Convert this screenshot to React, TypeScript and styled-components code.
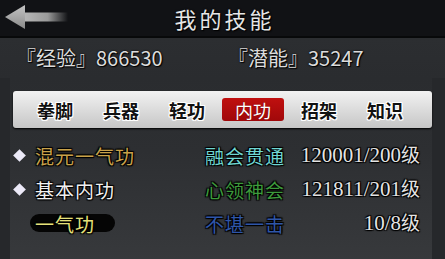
import React from "react";
import styled, { createGlobalStyle } from "styled-components";

const Global = createGlobalStyle`
  html, body { margin: 0; padding: 0; background: #222427; }
  body { width: 445px; height: 259px; overflow: hidden; }
`;

const Screen = styled.div`
  width: 445px;
  height: 259px;
  display: flex;
  flex-direction: column;
  background: #26282b;
  font-family: "Noto Sans CJK SC", "Liberation Sans", sans-serif;
  overflow: hidden;
`;

const Header = styled.div`
  height: 36px;
  flex: none;
  position: relative;
  display: flex;
  align-items: center;
  justify-content: center;
  background: #111215;
  border-bottom: 2px solid #08090a;
`;

const BackButton = styled.div`
  position: absolute;
  left: 4px;
  top: 4px;
  width: 64px;
  height: 28px;
`;

const Title = styled.div`
  color: #e6e6e6;
  font-size: 22px;
  letter-spacing: 3px;
  line-height: 1;
  margin-left: 4px;
  text-shadow: 0 0 2px #000, 1px 1px 1px #000;
`;

const Stats = styled.div`
  height: 40px;
  flex: none;
  display: grid;
  grid-template-columns: 212px 1fr;
  align-items: center;
  padding: 0 0 0 16px;
  background: linear-gradient(#2c2e31, #2a2c2f);
`;

const Stat = styled.div`
  color: #dcdcdc;
  font-size: 20px;
  line-height: 1;
  white-space: nowrap;
  text-shadow: 0 0 2px #000, 1px 1px 1px #000;
`;

const Body = styled.div`
  flex: 1;
  display: flex;
  flex-direction: column;
  margin: 0 13px 0 10px;
  background: linear-gradient(#2a2c2f, #2d2f32 40%, #37393c);
`;

const TabBar = styled.div`
  height: 37px;
  margin: 13px 0 0 3px;
  display: grid;
  grid-template-columns: repeat(6, 66px);
  align-items: center;
  padding-left: 9px;
  border-radius: 3px;
  background: linear-gradient(#f2f2f2, #dcdcdc 50%, #c6c6c6);
  box-shadow: 0 1px 2px #000;
`;

const Tab = styled.div<{ $active?: boolean }>`
  height: 23px;
  margin: 0 2px;
  display: flex;
  align-items: center;
  justify-content: center;
  border-radius: 3px;
  font-size: 18px;
  font-weight: ${(p) => (p.$active ? 400 : 700)};
  line-height: 1;
  color: ${(p) => (p.$active ? "#ffffff" : "#111111")};
  background: ${(p) => (p.$active ? "linear-gradient(#c0100f, #a0080a)" : "transparent")};
  text-shadow: ${(p) =>
    p.$active
      ? "0 0 1px #600"
      : "1px 0 0 #fff, -1px 0 0 #fff, 0 1px 0 #fff, 0 -1px 0 #fff, 1px 1px 0 #fff, -1px -1px 0 #fff, 1px -1px 0 #fff, -1px 1px 0 #fff"};
`;

const List = styled.div`
  display: flex;
  flex-direction: column;
  padding: 10px 0 0 0;
`;

const Row = styled.div`
  height: 34px;
  display: grid;
  grid-template-columns: 20px 175px 90px 1fr;
  align-items: center;
  padding-right: 12px;
  font-size: 19px;
  line-height: 1;
  white-space: nowrap;
`;

const Diamond = styled.span`
  width: 9px;
  height: 9px;
  margin-left: 5px;
  background: #eceaf8;
  transform: rotate(45deg);
`;

const outline = "1px 1px 1px #000, -1px -1px 1px #000, 1px -1px 1px #000, -1px 1px 1px #000";

const Name = styled.span<{ $color: string; $pill?: boolean }>`
  justify-self: start;
  color: ${(p) => p.$color};
  letter-spacing: 1px;
  padding: ${(p) => (p.$pill ? "0 20px 0 5px" : "0")};
  margin-left: ${(p) => (p.$pill ? "0" : "5px")};
  height: ${(p) => (p.$pill ? "18px" : "auto")};
  display: flex;
  align-items: center;
  border-radius: 9px;
  background: ${(p) => (p.$pill ? "#050505" : "transparent")};
  text-shadow: ${outline};
`;

const Level = styled.span<{ $color: string }>`
  color: ${(p) => p.$color};
  letter-spacing: 1px;
  text-shadow: ${outline};
`;

const Progress = styled.span`
  justify-self: end;
  color: #e4e4e4;
  font-family: "Liberation Serif", "Noto Sans CJK SC", serif;
  font-size: 21px;
  text-shadow: ${outline};
`;

const Unit = styled.span`
  font-family: "Noto Sans CJK SC", sans-serif;
  font-size: 19px;
`;

const BackArrow = () => (
  <svg width="64" height="28" viewBox="0 0 64 28">
    <defs>
      <linearGradient id="shaft" x1="0" x2="1" y1="0" y2="0">
        <stop offset="0" stopColor="#b8b8b8" />
        <stop offset="0.55" stopColor="#9a9a9a" />
        <stop offset="1" stopColor="#9a9a9a" stopOpacity="0" />
      </linearGradient>
      <linearGradient id="head" x1="0" x2="0" y1="0" y2="1">
        <stop offset="0" stopColor="#c4c4c4" />
        <stop offset="1" stopColor="#8a8a8a" />
      </linearGradient>
    </defs>
    <path d="M19 8.5 H64 V17.5 H19 Z" fill="url(#shaft)" />
    <path d="M1 13 L21 1 L21 25 Z" fill="url(#head)" />
  </svg>
);

const tabs = ["拳脚", "兵器", "轻功", "内功", "招架", "知识"];

const skills = [
  { name: "混元一气功", color: "#c9a24a", level: "融会贯通", lc: "#6fd6d2", prog: "120001/200", diamond: true },
  { name: "基本内功", color: "#f0f0f0", level: "心领神会", lc: "#3d9a3c", prog: "121811/201", diamond: true },
  { name: "一气功", color: "#e6e27a", level: "不堪一击", lc: "#2f56a8", prog: "10/8", diamond: false, pill: true },
];

export default function App() {
  return (
    <Screen>
      <Global />
      <Header>
        <BackButton>
          <BackArrow />
        </BackButton>
        <Title>我的技能</Title>
      </Header>
      <Stats>
        <Stat>『经验』866530</Stat>
        <Stat>『潜能』35247</Stat>
      </Stats>
      <Body>
        <TabBar>
          {tabs.map((t) => (
            <Tab key={t} $active={t === "内功"}>
              {t}
            </Tab>
          ))}
        </TabBar>
        <List>
          {skills.map((s) => (
            <Row key={s.name}>
              {s.diamond ? <Diamond /> : <span />}
              <Name $color={s.color} $pill={s.pill}>
                {s.name}
              </Name>
              <Level $color={s.lc}>{s.level}</Level>
              <Progress>
                {s.prog}
                <Unit>级</Unit>
              </Progress>
            </Row>
          ))}
        </List>
      </Body>
    </Screen>
  );
}
